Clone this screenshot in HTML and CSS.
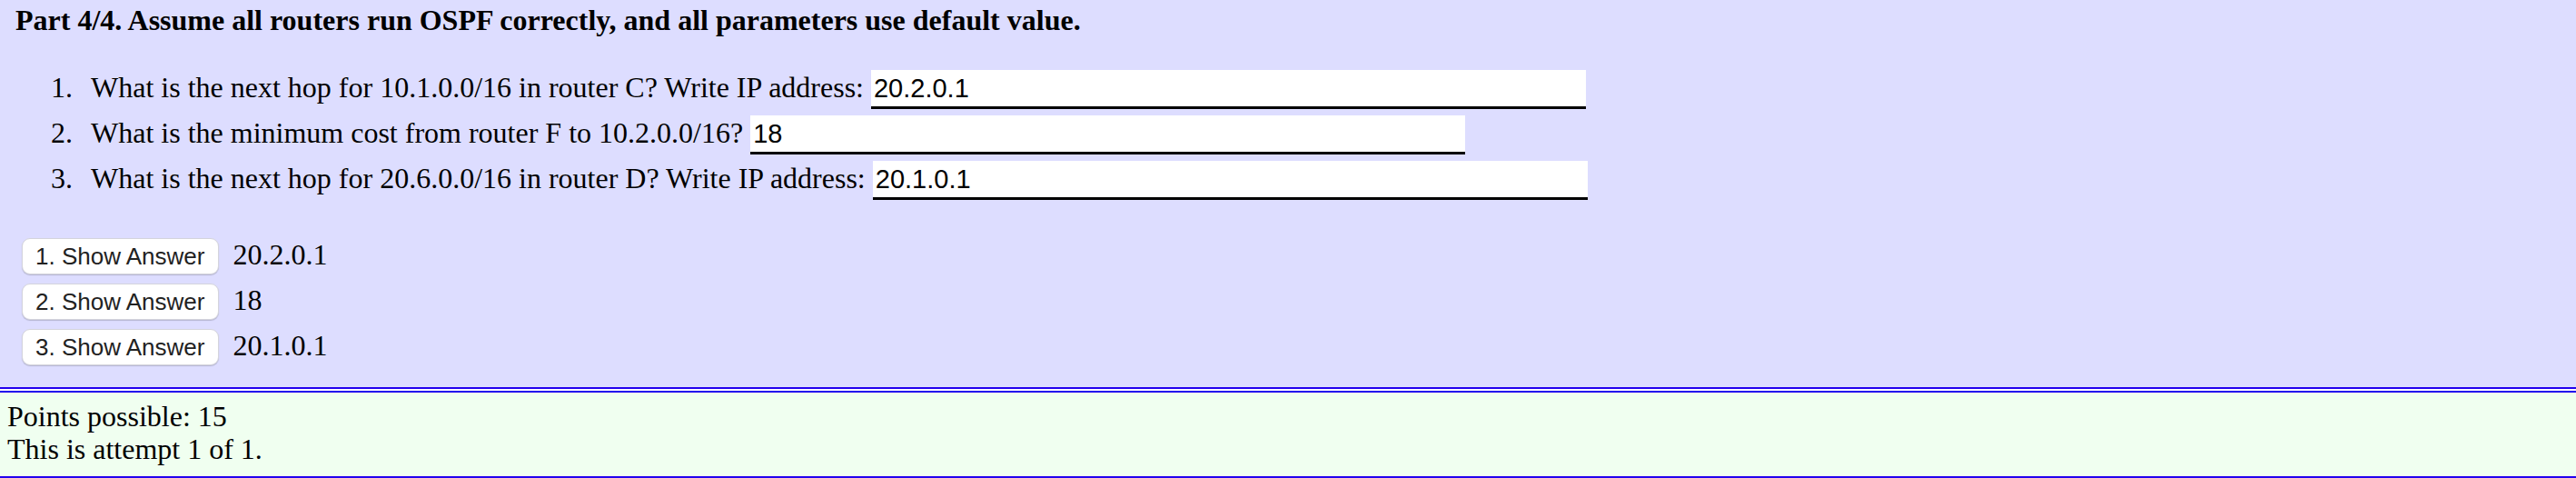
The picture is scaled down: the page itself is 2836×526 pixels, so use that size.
FILE: index.html
```html
<!DOCTYPE html>
<html>
<head>
<meta charset="utf-8">
<link rel="stylesheet" href="styles.css">
</head>
<body>
<div class="panel">
  <div class="title">Part 4/4. Assume all routers run OSPF correctly, and all parameters use default value.</div>
  <ol class="questions">
    <li>What is the next hop for 10.1.0.0/16 in router C? Write IP address: <input class="answer" type="text" value="20.2.0.1"></li>
    <li>What is the minimum cost from router F to 10.2.0.0/16? <input class="answer" type="text" value="18"></li>
    <li>What is the next hop for 20.6.0.0/16 in router D? Write IP address: <input class="answer" type="text" value="20.1.0.1"></li>
  </ol>
  <div class="reveal">
    <div class="reveal-row"><button class="show-btn">1. Show Answer</button><span class="reveal-text">20.2.0.1</span></div>
    <div class="reveal-row"><button class="show-btn">2. Show Answer</button><span class="reveal-text">18</span></div>
    <div class="reveal-row"><button class="show-btn">3. Show Answer</button><span class="reveal-text">20.1.0.1</span></div>
  </div>
</div>
<div class="footer">
  <div class="footer-line">Points possible: 15</div>
  <div class="footer-line">This is attempt 1 of 1.</div>
</div>
</body>
</html>
```

FILE: styles.css
```css
html, body {
  margin: 0;
  padding: 0;
  background: #ffffff;
}

body {
  font-family: "Liberation Serif", "Times New Roman", serif;
  font-size: 32px;
  color: #000;
}

.panel {
  background: #ddddff;
  padding: 4px 16px 24px 17px;
  border-bottom: 2px solid #2200ee;
}

.title {
  font-weight: bold;
  line-height: 37px;
}

.questions {
  list-style: none;
  counter-reset: q;
  margin: 32px 0 39px 0;
  padding: 0;
}

.questions li {
  counter-increment: q;
  line-height: 37px;
}

.questions li::before {
  content: counter(q) ".";
  display: inline-block;
  width: 63px;
  margin-right: 20px;
  text-align: right;
}

.answer {
  box-sizing: border-box;
  width: 787px;
  height: 43px;
  margin: 4px 0 3px 0;
  padding: 0 3px;
  border: none;
  border-bottom: 3px solid #000;
  background: #fff;
  font-family: "Liberation Sans", Arial, sans-serif;
  font-size: 29px;
  color: #000;
  vertical-align: baseline;
  outline: none;
}

.reveal {
  display: flex;
  flex-direction: column;
  gap: 10px;
  padding-left: 7px;
}

.reveal-row {
  display: flex;
  align-items: baseline;
  gap: 15px;
  height: 40px;
}

.show-btn {
  box-sizing: border-box;
  height: 40px;
  padding: 0 15px 0 14px;
  background: #fff;
  border: 1px solid #d4d4dc;
  border-radius: 9px;
  box-shadow: 0 1px 1px rgba(0, 0, 0, 0.18);
  font-family: "Liberation Sans", Helvetica, Arial, sans-serif;
  font-size: 26px;
  line-height: 38px;
  color: #222;
}

.reveal-text {
  line-height: 32px;
}

.footer {
  margin-top: 2px;
  background: #f0fff0;
  border-top: 2px solid #2200ee;
  border-bottom: 2px solid #2200ee;
  padding: 8px 8px 12px 8px;
}

.footer-line {
  line-height: 36px;
}
```
